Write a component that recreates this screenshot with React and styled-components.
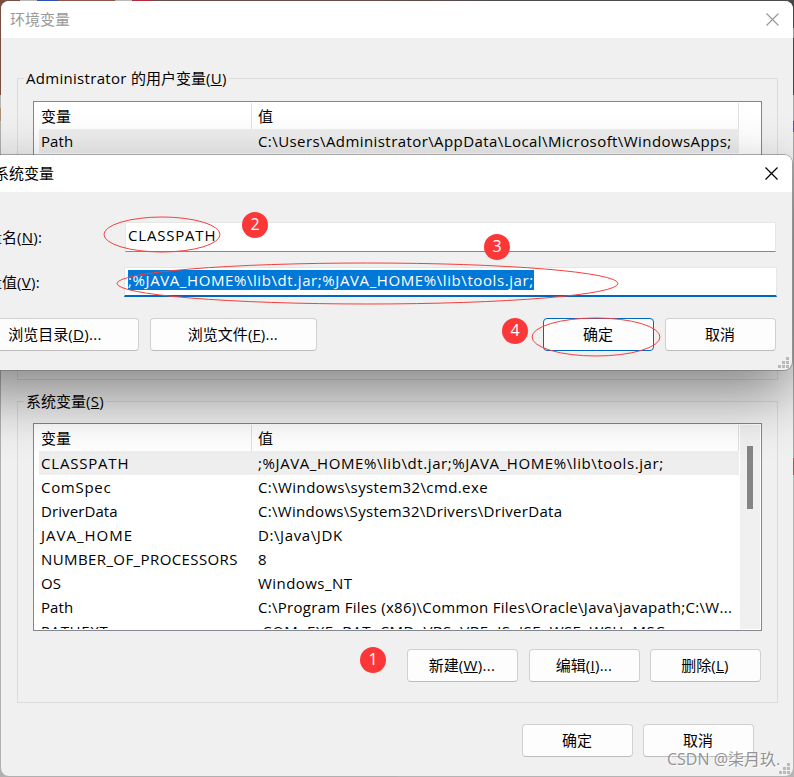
import { useState } from "react";
import styled, { createGlobalStyle } from "styled-components";

const GlobalStyle = createGlobalStyle`
  * {
    box-sizing: border-box;
  }

  body {
    margin: 0;
    overflow: hidden;
    font-family: "Open Sans", "Noto Sans CJK SC", sans-serif;
    font-size: 15px;
    line-height: 20px;
    color: #000;
  }
`;

const Desktop = styled.div`
  position: relative;
  width: 794px;
  height: 777px;
  padding: 1px;
  overflow: hidden;
  background:
    linear-gradient(
        to right,
        #7b4c40 20px,
        #b9b9b9 20px 37px,
        #2f51b4 37px 58px,
        #8a5648 58px 115px,
        #b9b9b9 115px 132px,
        #b02c3a 132px 152px,
        #6a4d49 152px 360px,
        #4c4c4c 500px
      )
      top / 100% 1px no-repeat,
    linear-gradient(to bottom, #7b4c40 95px, #b5b5b5 95px 108px, #a89070 108px 121px, #b0b0b0 121px)
      left / 50% 100% no-repeat,
    linear-gradient(
        to bottom,
        #454545 28px,
        #999 28px 38px,
        #454545 38px 95px,
        #a8a8a8 95px 121px,
        #5a5590 121px 132px,
        #a8a8a8 132px 458px,
        #c04a50 458px 475px,
        #b4b4b4 475px
      )
      right / 50% 100% no-repeat;
`;

const Window = styled.div`
  display: flex;
  flex-direction: column;
  height: 775px;
  width: 792px;
  border-radius: 8px;
  background: #f0f0f0;
  overflow: hidden;
`;

const TitleBar = styled.div`
  display: flex;
  flex-shrink: 0;
  align-items: center;
  justify-content: space-between;
  height: 37px;
  padding: 0 14px 2px 9px;
  background: #fff;
  color: ${(props) => (props.$inactive ? "#999" : "#000")};

  svg {
    margin-top: 2px;
  }
`;

const WindowBody = styled.div`
  display: flex;
  flex-direction: column;
  gap: 11px;
  padding: 30px 15px 0 16px;
`;

const Group = styled.fieldset`
  height: 312px;
  margin: 0;
  min-width: 0;
  padding: 0 15px;
  border: 1px solid #dcdcdc;
`;

const Legend = styled.legend`
  height: 20px;
  margin-left: -9px;
  padding: 0 2px;
`;

// Latin runs are tracked a little wider than the font's default
const Latin = styled.span`
  letter-spacing: 0.3px;
`;

const List = styled.div`
  display: flex;
  height: 208px;
  margin-top: ${(props) => props.$gap}px;
  padding: 1px;
  border: 1px solid #828790;
  background: #fff;
`;

const ListContent = styled.div`
  flex: 1;
  overflow: hidden;
  padding-left: 4px;
`;

const HeaderRow = styled.div`
  display: grid;
  grid-template-columns: 213px 1fr;
  height: 26px;
  margin-right: 1px;
`;

const HeaderCell = styled.div`
  padding: 3px 0 0 ${(props) => props.$pad}px;
  border-right: 1px solid #e0e0e0;
`;

const Row = styled.div`
  display: grid;
  grid-template-columns: 213px 1fr;
  height: 24px;
  margin-right: 1px;
  line-height: 24px;
  white-space: nowrap;
  background: ${(props) => (props.$selected ? "#eee" : "transparent")};
`;

const Cell = styled.div`
  padding-left: ${(props) => props.$pad}px;
  letter-spacing: ${(props) => props.$tracking}px;
`;

const ScrollGutter = styled.div`
  width: 20px;
`;

const Scrollbar = styled(ScrollGutter)`
  padding: 21px 0 0 7px;
  background: #f0f0f0;
`;

const Thumb = styled.div`
  width: 6px;
  height: 63px;
  background: #858585;
`;

const ButtonRow = styled.div`
  display: flex;
  justify-content: flex-end;
  gap: 10px;
  padding: ${(props) => props.$padding || 0};
`;

const Button = styled.button`
  width: ${(props) => props.$width || 111}px;
  height: 33px;
  margin-right: ${(props) => props.$after || 0}px;
  padding: 0 1px 2px 0;
  border: 1px solid ${(props) => (props.$primary ? "#0067c0" : "#d0d0d0")};
  border-bottom-color: ${(props) => (props.$primary ? "#0067c0" : "#bcbcbc")};
  border-radius: 4px;
  background: #fdfdfd;
  color: #000;
  font: inherit;
`;

const EditDialog = styled(Window)`
  position: absolute;
  left: -46px;
  top: 155px;
  width: 838px;
  height: 215px;
  overflow: visible;
  box-shadow:
    0 0 0 1px rgba(110, 110, 110, 0.55),
    0 24px 60px rgba(0, 0, 0, 0.45);

  ${TitleBar} {
    padding-left: 10px;
    border-radius: 8px 8px 0 0;
  }
`;

const Form = styled.div`
  display: grid;
  grid-template-columns: 152px 653px;
  row-gap: 15px;
  padding: 30px 0 0 18px;
`;

const Label = styled.label`
  padding-top: 5px;
`;

const Field = styled.div`
  height: 30px;
  margin: ${(props) => (props.$focused ? 0 : "0 1px")};
  padding: ${(props) => (props.$focused ? "2px 3px" : "2px 2px")};
  border: 1px solid #e6e6e6;
  border-bottom: ${(props) => (props.$focused ? "2px solid #0067c0" : "1px solid #868686")};
  background: #fff;
  letter-spacing: ${(props) => props.$tracking}px;
`;

const Selection = styled.span`
  display: inline-block;
  height: 20px;
  background: #0078d7;
  color: #fff;
`;

const DialogButtons = styled.div`
  display: flex;
  gap: 11px;
  padding: 21px 0 0 18px;
`;

const Push = styled.div`
  flex: 0 0 204px;
`;

const Grip = styled.svg`
  position: absolute;
  right: ${(props) => props.$right}px;
  bottom: ${(props) => props.$bottom}px;
`;

const Annotations = styled.svg`
  position: absolute;
  left: 0;
  top: 0;
  pointer-events: none;
`;

const Badge = styled.div`
  position: absolute;
  left: ${(props) => props.$x}px;
  top: ${(props) => props.$y}px;
  width: 26px;
  height: 26px;
  border-radius: 50%;
  background: #fc3737;
  color: #fff;
  font-size: 16px;
  line-height: 24px;
  text-align: center;
`;

const Watermark = styled.div`
  position: absolute;
  left: 667px;
  top: 749px;
  white-space: nowrap;
  color: rgba(135, 135, 135, 0.9);
  font-size: 16px;
  text-shadow: 1px 1px 0 rgba(255, 255, 255, 0.7);
`;

// name, value, then the tracking of each in px
const userVariables = [
  ["Path", "C:\\Users\\Administrator\\AppData\\Local\\Microsoft\\WindowsApps;", 0.1, 0.42],
];

const systemVariables = [
  ["CLASSPATH", ";%JAVA_HOME%\\lib\\dt.jar;%JAVA_HOME%\\lib\\tools.jar;", 0.8, 0.59],
  ["ComSpec", "C:\\Windows\\system32\\cmd.exe", 0.7, 0.4],
  ["DriverData", "C:\\Windows\\System32\\Drivers\\DriverData", 0.1, 0.31],
  ["JAVA_HOME", "D:\\Java\\JDK", 1, 0.6],
  ["NUMBER_OF_PROCESSORS", "8", 0.4, 0],
  ["OS", "Windows_NT", 0.1, 0.45],
  ["Path", "C:\\Program Files (x86)\\Common Files\\Oracle\\Java\\javapath;C:\\W...", 0.1, 0.29],
  ["PATHEXT", ".COM;.EXE;.BAT;.CMD;.VBS;.VBE;.JS;.JSE;.WSF;.WSH;.MSC", 0.6, 0.42],
];

const badges = [
  { label: 1, x: 360, y: 647 },
  { label: 2, x: 242, y: 212 },
  { label: 3, x: 484, y: 234 },
  { label: 4, x: 502, y: 318 },
];

const CloseIcon = () => (
  <svg width="13" height="13" viewBox="0 0 13 13" stroke="currentColor" strokeWidth="1.2">
    <path d="M0.5 0.5 12.5 12.5M12.5 0.5 0.5 12.5" />
  </svg>
);

const SizeGrip = ({ right, bottom }) => (
  <Grip $right={right} $bottom={bottom} width="11" height="11" fill="#b9b9b9">
    {[[8, 0], [4, 4], [8, 4], [0, 8], [4, 8], [8, 8]].map(([x, y]) => (
      <rect key={`${x}-${y}`} x={x} y={y} width="3" height="3" />
    ))}
  </Grip>
);

const AccessKey = ({ letter }) => (
  <Latin>
    (<u>{letter}</u>)
  </Latin>
);

const VariableList = ({ rows, gap, scrollable }) => {
  const [selected, setSelected] = useState(0);

  return (
    <List $gap={gap}>
      <ListContent>
        <HeaderRow>
          <HeaderCell $pad={2}>变量</HeaderCell>
          <HeaderCell $pad={6}>值</HeaderCell>
        </HeaderRow>
        {rows.map(([name, value, nameTracking, valueTracking], index) => (
          <Row key={name} $selected={index === selected} onClick={() => setSelected(index)}>
            <Cell $pad={2} $tracking={nameTracking}>
              {name}
            </Cell>
            <Cell $pad={6} $tracking={valueTracking}>
              {value}
            </Cell>
          </Row>
        ))}
      </ListContent>
      {scrollable ? (
        <Scrollbar>
          <Thumb />
        </Scrollbar>
      ) : (
        <ScrollGutter />
      )}
    </List>
  );
};

export default function App() {
  return (
    <Desktop>
      <GlobalStyle />
      <Window>
        <TitleBar $inactive>
          环境变量
          <CloseIcon />
        </TitleBar>
        <WindowBody>
          <Group>
            <Legend>
              <Latin>Administrator </Latin>的用户变量
              <AccessKey letter="U" />
            </Legend>
            <VariableList rows={userVariables} gap={13} />
          </Group>
          <Group>
            <Legend>
              系统变量
              <AccessKey letter="S" />
            </Legend>
            <VariableList rows={systemVariables} gap={12} scrollable />
            <ButtonRow $padding="18px 1px 0 0">
              <Button $after={1}>
                新建
                <AccessKey letter="W" />
                <Latin>...</Latin>
              </Button>
              <Button>
                编辑
                <AccessKey letter="I" />
                <Latin>...</Latin>
              </Button>
              <Button>
                删除
                <AccessKey letter="L" />
              </Button>
            </ButtonRow>
          </Group>
          <ButtonRow $padding="10px 24px 0 0">
            <Button>确定</Button>
            <Button>取消</Button>
          </ButtonRow>
        </WindowBody>
      </Window>
      <SizeGrip right={4} bottom={3} />

      <EditDialog>
        <TitleBar>
          编辑系统变量
          <CloseIcon />
        </TitleBar>
        <Form>
          <Label>
            变量名
            <AccessKey letter="N" />:
          </Label>
          <Field $tracking={0.8}>CLASSPATH</Field>
          <Label>
            变量值
            <AccessKey letter="V" />:
          </Label>
          <Field $focused $tracking={0.59}>
            <Selection>;%JAVA_HOME%\lib\dt.jar;%JAVA_HOME%\lib\tools.jar;</Selection>
          </Field>
        </Form>
        <DialogButtons>
          <Button $width={167}>
            浏览目录
            <AccessKey letter="D" />
            <Latin>...</Latin>
          </Button>
          <Button $width={167}>
            浏览文件
            <AccessKey letter="F" />
            <Latin>...</Latin>
          </Button>
          <Push />
          <Button $primary>确定</Button>
          <Button>取消</Button>
        </DialogButtons>
        <SizeGrip right={3} bottom={2} />
      </EditDialog>

      <Annotations width="794" height="777" fill="none" stroke="#f4403c" strokeWidth="1">
        <ellipse cx="162" cy="234.500" rx="58" ry="17.500" />
        <ellipse cx="367.500" cy="283.500" rx="250.500" ry="20.500" />
        <ellipse cx="596" cy="337" rx="64" ry="19" />
      </Annotations>
      {badges.map((badge) => (
        <Badge key={badge.label} $x={badge.x} $y={badge.y}>
          {badge.label}
        </Badge>
      ))}
      <Watermark>CSDN @柒月玖.</Watermark>
    </Desktop>
  );
}
